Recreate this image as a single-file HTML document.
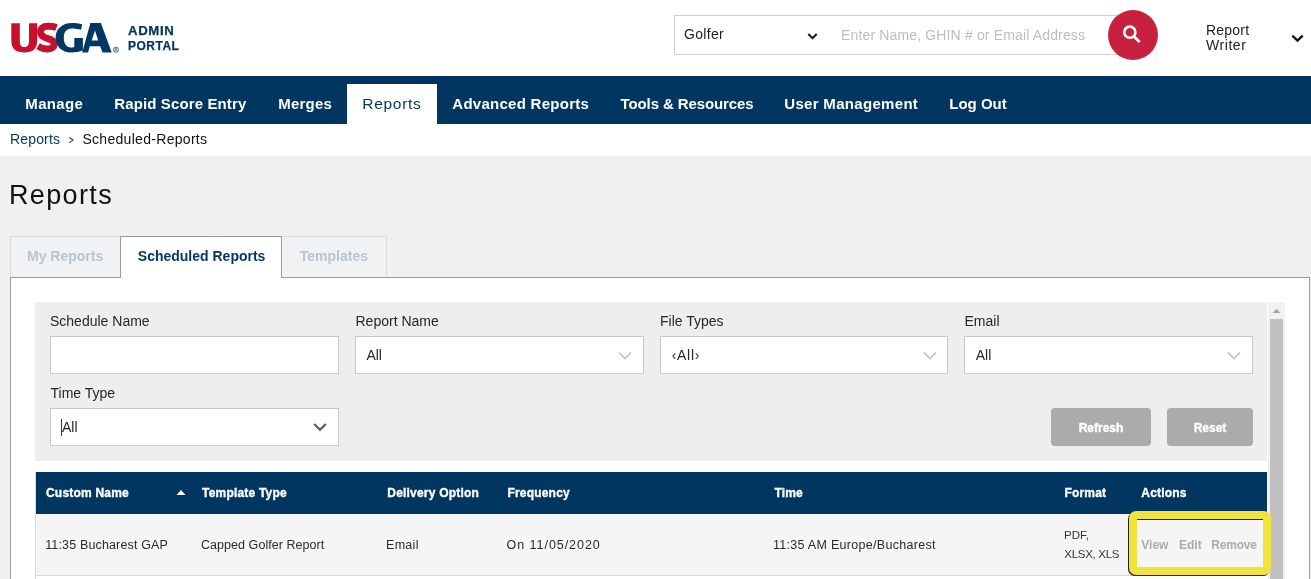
<!DOCTYPE html>
<html><head><meta charset="utf-8">
<style>
html,body{margin:0;padding:0;}
body{-webkit-font-smoothing:antialiased;width:1311px;height:579px;overflow:hidden;position:relative;background:#eff0f2;font-family:"Liberation Sans",sans-serif;color:#333;}
.a{position:absolute;white-space:nowrap;}
.t14{font-size:14px;line-height:14px;}
.t13{font-size:13px;line-height:13px;}
.t12{font-size:12px;line-height:12px;}
.b{font-weight:700;}
#hdr{position:absolute;left:0;top:0;width:1311px;height:76px;background:#fff;}
#nav{position:absolute;left:0;top:76px;width:1311px;height:48px;background:#00365f;}
.nv{position:absolute;top:20.3px;font-size:15px;line-height:15px;font-weight:700;color:#fff;white-space:nowrap;}
.inp{height:36px;border:1px solid #c9c9c9;background:#fff;}
.btn{height:38px;border-radius:4px;background:#ababab;color:#fff;font-size:12px;line-height:40px;font-weight:700;text-align:center;-webkit-text-stroke:0.35px #fff;}
.th{top:487.3px;font-size:12px;line-height:12px;font-weight:700;color:#fff;letter-spacing:0.2px;-webkit-text-stroke:0.35px #fff;}
.td{top:538.6px;font-size:12.5px;line-height:12.5px;color:#2a2a2a;}
.act{top:538.5px;font-size:12px;line-height:12px;font-weight:700;color:#ababab;}
#crumb{position:absolute;left:0;top:124px;width:1311px;height:32px;background:#fff;}
</style></head>
<body><div style="position:absolute;left:0;top:0;width:1311px;height:579px;will-change:transform">
<div id="hdr">
  <svg class="a" style="left:0;top:0" width="130" height="60" viewBox="0 0 130 60">
    <path fill="#c8102e" d="M11.3 23.3H19.8V40.5C19.8 45.5 21.5 47 24.4 47C27.3 47 29 45.5 29 40.5V23.3H37.2V40.5C37.2 49 32.5 52.5 24.3 52.5C16 52.5 11.3 49 11.3 40.5Z"/>
    <path fill="none" stroke="#c8102e" stroke-width="7" d="M56.5 27.5C53 26.2 50 26.3 47.5 26.3C43 26.3 40.5 28.5 40.5 32C40.5 36 44 37.5 47.5 38.5C51.5 39.5 54.2 41 54.2 44C54.2 47.5 51 49 47 49C44 49 41 48 38 46.3"/>
    <path fill="#003865" d="M82.2 24.2C79 23.2 75.5 22.9 72 22.9C62 22.9 55.6 29 55.6 37.7C55.6 46.5 62 52.4 71 52.4C75 52.4 79.5 51.8 82.9 50.5V38H74.3V47C73 47.4 72 47.5 71 47.5C66.5 47.5 63.8 43.5 63.8 37.7C63.8 32 66.5 28.5 71.5 28.5C75 28.5 78.5 29.2 81 29.8Z"/>
    <path fill="#003865" fill-rule="evenodd" d="M82.2 52.4L90.4 22.9H100.9L111.7 52.4H102.6L100.2 46.2H89.8L88.1 52.4ZM91.7 40.6L95 30.5L98.2 40.6Z"/>
    <circle cx="115.9" cy="49.7" r="2.5" fill="none" stroke="#003865" stroke-width="0.7"/><path d="M115 51.2V48.2H116.3A0.8 0.8 0 0 1 116.3 49.8H115M116 49.8L116.9 51.2" fill="none" stroke="#003865" stroke-width="0.5"/>
  </svg>
  <div class="a t12 b" style="left:127.6px;top:24.5px;color:#00365f;letter-spacing:0.55px;transform:scaleX(1.1);transform-origin:0 0;-webkit-text-stroke:0.25px #00365f">ADMIN</div>
  <div class="a t12 b" style="left:128px;top:39.5px;color:#00365f;letter-spacing:0.5px;-webkit-text-stroke:0.25px #00365f">PORTAL</div>

  <div class="a" style="left:674px;top:15px;width:460px;height:38px;border:1px solid #cfcfcf;background:#fff"></div>
  <div class="a t14" style="left:684px;top:27.1px;color:#222;letter-spacing:0.3px">Golfer</div>
  <svg class="a" style="left:806px;top:31px" width="13" height="10" viewBox="0 0 13 10"><path d="M2.3 3L6.5 7.2L10.7 3" fill="none" stroke="#111" stroke-width="2"/></svg>
  <div class="a t14" style="left:841px;top:28.3px;color:#bdbdbd;letter-spacing:0.15px">Enter Name, GHIN # or Email Address</div>
  <div class="a" style="left:1108px;top:10px;width:50px;height:50px;border-radius:50%;background:#c8203f"></div>
  <svg class="a" style="left:1119.4px;top:21.2px" width="26" height="26" viewBox="0 0 26 26"><circle cx="10.8" cy="11.2" r="5.6" fill="none" stroke="#fff" stroke-width="2.6"/><path d="M14.8 15.2L20.6 21" stroke="#fff" stroke-width="2.8" stroke-linecap="butt"/></svg>
  <div class="a t14" style="left:1206px;top:22.5px;color:#222;letter-spacing:0.2px">Report</div>
  <div class="a t14" style="left:1206px;top:37.8px;color:#222;letter-spacing:0.55px">Writer</div>
  <svg class="a" style="left:1289px;top:31px" width="16" height="14" viewBox="0 0 16 14"><path d="M3.3 4.6L8.5 9.6L13.7 4.6" fill="none" stroke="#111" stroke-width="2.2"/></svg>
</div>

<div id="nav">
  <div class="nv" style="left:25.3px;letter-spacing:0.35px">Manage</div>
  <div class="nv" style="left:114.3px;letter-spacing:0.12px">Rapid Score Entry</div>
  <div class="nv" style="left:278.3px;letter-spacing:0.2px">Merges</div>
  <div class="a" style="left:347px;top:8px;width:90px;height:40px;background:#fff"></div>
  <div class="nv" style="left:362.3px;font-weight:400;color:#00365f;font-size:15.5px;letter-spacing:0.7px">Reports</div>
  <div class="nv" style="left:452.3px;letter-spacing:0.27px">Advanced Reports</div>
  <div class="nv" style="left:620.5px;letter-spacing:-0.1px">Tools &amp; Resources</div>
  <div class="nv" style="left:784.3px;letter-spacing:0.31px">User Management</div>
  <div class="nv" style="left:949.3px">Log Out</div>
</div>

<div id="crumb">
  <div class="a t14" style="left:10px;top:8px;color:#00365f;letter-spacing:0.15px">Reports</div>
  <svg class="a" style="left:67px;top:12px" width="8" height="8" viewBox="0 0 8 8"><path d="M2.3 1.5L6 4.1L2.3 6.7" fill="none" stroke="#444" stroke-width="1.1"/></svg>
  <div class="a t14" style="left:82.4px;top:8px;color:#111;letter-spacing:0.3px">Scheduled-Reports</div>
</div>

<div class="a" style="left:9px;top:182.3px;font-size:27px;line-height:27px;color:#111;letter-spacing:1.35px">Reports</div>

<!-- tabs -->
<div class="a" style="left:10px;top:236px;width:109px;height:41px;background:#f1f2f4;border:1px solid #dcdcdc;border-bottom:none"></div>
<div class="a t14 b" style="left:27px;top:249.4px;color:#b9c5d0">My Reports</div>
<div class="a" style="left:282px;top:236px;width:104px;height:41px;background:#f1f2f4;border:1px solid #dcdcdc;border-left:none;border-bottom:none"></div>
<div class="a t14 b" style="left:299.8px;top:249.4px;color:#b9c5d0">Templates</div>

<!-- content box -->
<div class="a" style="left:10px;top:277px;width:1298px;height:320px;background:#fff;border:1px solid #9b9b9b"></div>
<div class="a" style="left:120px;top:236px;width:160px;height:41px;background:#fff;border:1px solid #9b9b9b;border-bottom:none"></div>
<div class="a t14 b" style="left:137.8px;top:249.4px;color:#00365f">Scheduled Reports</div>


<!-- filter -->
<div class="a" style="left:35px;top:302px;width:1232px;height:159px;background:#eeeeee"></div>
<div class="a t14" style="left:50px;top:314px;color:#262626">Schedule Name</div>
<div class="a t14" style="left:355.5px;top:314px;color:#262626">Report Name</div>
<div class="a t14" style="left:660px;top:314px;color:#262626">File Types</div>
<div class="a t14" style="left:964.5px;top:314px;color:#262626">Email</div>
<div class="a inp" style="left:50px;top:336px;width:287px"></div>
<div class="a inp" style="left:355px;top:336px;width:287px"></div>
<div class="a inp" style="left:660px;top:336px;width:286px"></div>
<div class="a inp" style="left:964px;top:336px;width:287px"></div>
<div class="a t14" style="left:366.4px;top:348px;color:#262626">All</div>
<div class="a t14" style="left:671.7px;top:348px;color:#262626;letter-spacing:0.7px">&#8249;All&#8250;</div>
<div class="a t14" style="left:975.7px;top:348px;color:#262626">All</div>
<svg class="a" style="left:617px;top:350px" width="16" height="12" viewBox="0 0 16 12"><path d="M2 2.5L8 8.5L14 2.5" fill="none" stroke="#c2c2c2" stroke-width="1.7"/></svg>
<svg class="a" style="left:921.5px;top:350px" width="16" height="12" viewBox="0 0 16 12"><path d="M2 2.5L8 8.5L14 2.5" fill="none" stroke="#c2c2c2" stroke-width="1.7"/></svg>
<svg class="a" style="left:1226px;top:350px" width="16" height="12" viewBox="0 0 16 12"><path d="M2 2.5L8 8.5L14 2.5" fill="none" stroke="#c2c2c2" stroke-width="1.7"/></svg>
<div class="a t14" style="left:50.5px;top:386px;color:#262626">Time Type</div>
<div class="a inp" style="left:50px;top:408px;width:287px"></div>
<div class="a" style="left:61px;top:419px;width:1px;height:17px;background:#333"></div>
<div class="a t14" style="left:62px;top:420.2px;color:#262626">All</div>
<svg class="a" style="left:312px;top:421px" width="16" height="12" viewBox="0 0 16 12"><path d="M2.2 3L8 8.8L13.8 3" fill="none" stroke="#555" stroke-width="2"/></svg>
<div class="a btn" style="left:1051px;top:408px;width:100px">Refresh</div>
<div class="a btn" style="left:1167px;top:408px;width:86px">Reset</div>

<!-- table -->
<div class="a" style="left:35px;top:461px;width:1232px;height:11px;background:#fff"></div>
<div class="a" style="left:35px;top:472px;width:1px;height:120px;background:#dadada"></div>
<div class="a" style="left:36px;top:472px;width:1231px;height:42px;background:#00365f"></div>
<div class="a th" style="left:46px">Custom Name</div>
<svg class="a" style="left:175px;top:488px" width="12" height="8" viewBox="0 0 12 8"><path d="M1.5 7H10.5L6 2Z" fill="#fff"/></svg>
<div class="a th" style="left:202px">Template Type</div>
<div class="a th" style="left:387.3px">Delivery Option</div>
<div class="a th" style="left:507.4px">Frequency</div>
<div class="a th" style="left:774.4px">Time</div>
<div class="a th" style="left:1064.4px">Format</div>
<div class="a th" style="left:1141.3px">Actions</div>
<div class="a" style="left:36px;top:514px;width:1231px;height:61px;background:#f5f5f5;border-bottom:1px solid #d9d9d9"></div>
<div class="a td" style="left:45.2px;letter-spacing:0.15px">11:35 Bucharest GAP</div>
<div class="a td" style="left:201px;letter-spacing:0.05px">Capped Golfer Report</div>
<div class="a td" style="left:386px;letter-spacing:0.3px">Email</div>
<div class="a td" style="left:506.6px;letter-spacing:0.95px">On 11/05/2020</div>
<div class="a td" style="left:772.9px;letter-spacing:0.3px">11:35 AM Europe/Bucharest</div>
<div class="a" style="left:1064px;top:530.3px;font-size:11.5px;line-height:11.5px;letter-spacing:0px;color:#333">PDF,</div>
<div class="a" style="left:1064.3px;top:549.3px;font-size:11.5px;line-height:11.5px;letter-spacing:-0.3px;color:#333">XLSX, XLS</div>

<!-- scrollbar -->
<div class="a" style="left:1268px;top:302px;width:17px;height:277px;background:#f1f1f1"></div>
<svg class="a" style="left:1268px;top:302px" width="17" height="17" viewBox="0 0 17 17"><path d="M4.5 11H12.5L8.5 7Z" fill="#a3a3a3"/></svg>
<div class="a" style="left:1270px;top:319px;width:13px;height:260px;background:#c1c1c1"></div>


<!-- highlight -->
<div class="a" style="left:1129px;top:511px;width:126px;height:48px;border:8px solid #f2e33b;border-radius:7px;box-shadow:-1px 1px 0 #222, inset 0 1px 0 #222;background:#f5f5f5"></div>
<div class="a act" style="left:1141.3px">View</div>
<div class="a act" style="left:1179px">Edit</div>
<div class="a act" style="left:1211.3px;letter-spacing:-0.2px">Remove</div>

</div></body></html>
